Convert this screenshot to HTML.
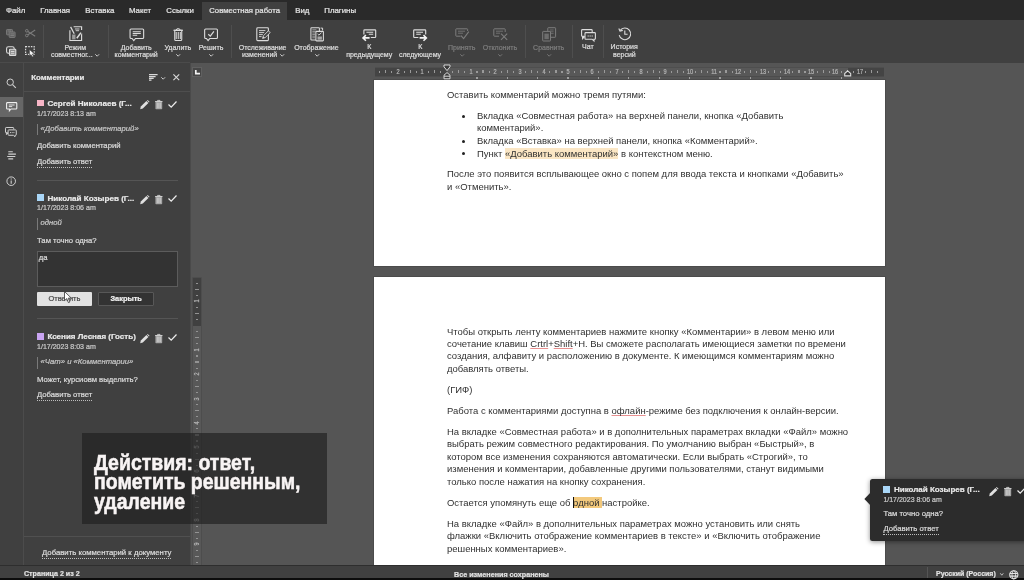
<!DOCTYPE html>
<html><head><meta charset="utf-8"><title>doc</title>
<style>
html,body{margin:0;padding:0;background:#555;}
body{width:1024px;height:580px;overflow:hidden;position:relative;font-family:"Liberation Sans",sans-serif;}
#app{position:absolute;left:0;top:0;width:1024px;height:580px;overflow:hidden;background:#555;filter:blur(0.35px);}
.t{position:absolute;white-space:nowrap;-webkit-text-stroke:0.22px currentColor;}
.t.d{-webkit-text-stroke:0;}
.r{position:absolute;}
svg{overflow:visible;}
</style></head><body><div id="app">
<div class="r" style="left:0px;top:0px;width:1024px;height:580px;background:#555;"></div>
<div class="r" style="left:374.5px;top:67.2px;width:509.5px;height:9px;background:#585858;"></div>
<div class="r" style="left:374.5px;top:67.2px;width:72.10000000000002px;height:9px;background:#444;"></div>
<div class="r" style="left:847.5px;top:67.2px;width:36.5px;height:9px;background:#444;"></div>
<div class="r" style="left:374.5px;top:76.2px;width:509.5px;height:1.2px;background:#4c4c4c;"></div>
<div class="r" style="left:374.5px;top:66.6px;width:509.5px;height:0.8px;background:#4e4e4e;"></div>
<div class="r" style="left:379.2px;top:70.5px;width:1.2px;height:2px;background:#9a9a9a;"></div>
<div class="r" style="left:385.2px;top:69.9px;width:1.2px;height:3.6px;background:#9a9a9a;"></div>
<div class="r" style="left:391.3px;top:70.5px;width:1.2px;height:2px;background:#9a9a9a;"></div>
<div class="t" style="left:298.0px;width:200px;text-align:center;top:68.12px;font-size:7px;line-height:8.75px;color:#b4b4b4;transform:scaleX(0.8);letter-spacing:-0.2px;">2</div>
<div class="r" style="left:403.5px;top:70.5px;width:1.2px;height:2px;background:#9a9a9a;"></div>
<div class="r" style="left:409.6px;top:69.9px;width:1.2px;height:3.6px;background:#9a9a9a;"></div>
<div class="r" style="left:415.6px;top:70.5px;width:1.2px;height:2px;background:#9a9a9a;"></div>
<div class="t" style="left:322.3px;width:200px;text-align:center;top:68.12px;font-size:7px;line-height:8.75px;color:#b4b4b4;transform:scaleX(0.8);letter-spacing:-0.2px;">1</div>
<div class="r" style="left:427.8px;top:70.5px;width:1.2px;height:2px;background:#9a9a9a;"></div>
<div class="r" style="left:433.9px;top:69.9px;width:1.2px;height:3.6px;background:#9a9a9a;"></div>
<div class="r" style="left:439.9px;top:70.5px;width:1.2px;height:2px;background:#9a9a9a;"></div>
<div class="r" style="left:452.1px;top:70.5px;width:1.2px;height:2px;background:#9a9a9a;"></div>
<div class="r" style="left:458.1px;top:69.9px;width:1.2px;height:3.6px;background:#9a9a9a;"></div>
<div class="r" style="left:464.2px;top:70.5px;width:1.2px;height:2px;background:#9a9a9a;"></div>
<div class="t" style="left:370.90000000000003px;width:200px;text-align:center;top:68.12px;font-size:7px;line-height:8.75px;color:#b4b4b4;transform:scaleX(0.8);letter-spacing:-0.2px;">1</div>
<div class="r" style="left:476.4px;top:70.5px;width:1.2px;height:2px;background:#9a9a9a;"></div>
<div class="r" style="left:482.4px;top:69.9px;width:1.2px;height:3.6px;background:#9a9a9a;"></div>
<div class="r" style="left:488.5px;top:70.5px;width:1.2px;height:2px;background:#9a9a9a;"></div>
<div class="t" style="left:395.20000000000005px;width:200px;text-align:center;top:68.12px;font-size:7px;line-height:8.75px;color:#b4b4b4;transform:scaleX(0.8);letter-spacing:-0.2px;">2</div>
<div class="r" style="left:500.7px;top:70.5px;width:1.2px;height:2px;background:#9a9a9a;"></div>
<div class="r" style="left:506.8px;top:69.9px;width:1.2px;height:3.6px;background:#9a9a9a;"></div>
<div class="r" style="left:512.8px;top:70.5px;width:1.2px;height:2px;background:#9a9a9a;"></div>
<div class="t" style="left:419.5px;width:200px;text-align:center;top:68.12px;font-size:7px;line-height:8.75px;color:#b4b4b4;transform:scaleX(0.8);letter-spacing:-0.2px;">3</div>
<div class="r" style="left:525.0px;top:70.5px;width:1.2px;height:2px;background:#9a9a9a;"></div>
<div class="r" style="left:531.0px;top:69.9px;width:1.2px;height:3.6px;background:#9a9a9a;"></div>
<div class="r" style="left:537.1px;top:70.5px;width:1.2px;height:2px;background:#9a9a9a;"></div>
<div class="t" style="left:443.80000000000007px;width:200px;text-align:center;top:68.12px;font-size:7px;line-height:8.75px;color:#b4b4b4;transform:scaleX(0.8);letter-spacing:-0.2px;">4</div>
<div class="r" style="left:549.3px;top:70.5px;width:1.2px;height:2px;background:#9a9a9a;"></div>
<div class="r" style="left:555.4px;top:69.9px;width:1.2px;height:3.6px;background:#9a9a9a;"></div>
<div class="r" style="left:561.4px;top:70.5px;width:1.2px;height:2px;background:#9a9a9a;"></div>
<div class="t" style="left:468.1px;width:200px;text-align:center;top:68.12px;font-size:7px;line-height:8.75px;color:#b4b4b4;transform:scaleX(0.8);letter-spacing:-0.2px;">5</div>
<div class="r" style="left:573.6px;top:70.5px;width:1.2px;height:2px;background:#9a9a9a;"></div>
<div class="r" style="left:579.6px;top:69.9px;width:1.2px;height:3.6px;background:#9a9a9a;"></div>
<div class="r" style="left:585.7px;top:70.5px;width:1.2px;height:2px;background:#9a9a9a;"></div>
<div class="t" style="left:492.4000000000001px;width:200px;text-align:center;top:68.12px;font-size:7px;line-height:8.75px;color:#b4b4b4;transform:scaleX(0.8);letter-spacing:-0.2px;">6</div>
<div class="r" style="left:597.9px;top:70.5px;width:1.2px;height:2px;background:#9a9a9a;"></div>
<div class="r" style="left:604.0px;top:69.9px;width:1.2px;height:3.6px;background:#9a9a9a;"></div>
<div class="r" style="left:610.0px;top:70.5px;width:1.2px;height:2px;background:#9a9a9a;"></div>
<div class="t" style="left:516.7px;width:200px;text-align:center;top:68.12px;font-size:7px;line-height:8.75px;color:#b4b4b4;transform:scaleX(0.8);letter-spacing:-0.2px;">7</div>
<div class="r" style="left:622.2px;top:70.5px;width:1.2px;height:2px;background:#9a9a9a;"></div>
<div class="r" style="left:628.2px;top:69.9px;width:1.2px;height:3.6px;background:#9a9a9a;"></div>
<div class="r" style="left:634.3px;top:70.5px;width:1.2px;height:2px;background:#9a9a9a;"></div>
<div class="t" style="left:541.0px;width:200px;text-align:center;top:68.12px;font-size:7px;line-height:8.75px;color:#b4b4b4;transform:scaleX(0.8);letter-spacing:-0.2px;">8</div>
<div class="r" style="left:646.5px;top:70.5px;width:1.2px;height:2px;background:#9a9a9a;"></div>
<div class="r" style="left:652.6px;top:69.9px;width:1.2px;height:3.6px;background:#9a9a9a;"></div>
<div class="r" style="left:658.6px;top:70.5px;width:1.2px;height:2px;background:#9a9a9a;"></div>
<div class="t" style="left:565.3000000000001px;width:200px;text-align:center;top:68.12px;font-size:7px;line-height:8.75px;color:#b4b4b4;transform:scaleX(0.8);letter-spacing:-0.2px;">9</div>
<div class="r" style="left:670.8px;top:70.5px;width:1.2px;height:2px;background:#9a9a9a;"></div>
<div class="r" style="left:676.9px;top:69.9px;width:1.2px;height:3.6px;background:#9a9a9a;"></div>
<div class="r" style="left:682.9px;top:70.5px;width:1.2px;height:2px;background:#9a9a9a;"></div>
<div class="t" style="left:589.6px;width:200px;text-align:center;top:68.12px;font-size:7px;line-height:8.75px;color:#b4b4b4;transform:scaleX(0.8);letter-spacing:-0.2px;">10</div>
<div class="r" style="left:695.1px;top:70.5px;width:1.2px;height:2px;background:#9a9a9a;"></div>
<div class="r" style="left:701.1px;top:69.9px;width:1.2px;height:3.6px;background:#9a9a9a;"></div>
<div class="r" style="left:707.2px;top:70.5px;width:1.2px;height:2px;background:#9a9a9a;"></div>
<div class="t" style="left:613.9000000000001px;width:200px;text-align:center;top:68.12px;font-size:7px;line-height:8.75px;color:#b4b4b4;transform:scaleX(0.8);letter-spacing:-0.2px;">11</div>
<div class="r" style="left:719.4px;top:70.5px;width:1.2px;height:2px;background:#9a9a9a;"></div>
<div class="r" style="left:725.4px;top:69.9px;width:1.2px;height:3.6px;background:#9a9a9a;"></div>
<div class="r" style="left:731.5px;top:70.5px;width:1.2px;height:2px;background:#9a9a9a;"></div>
<div class="t" style="left:638.2px;width:200px;text-align:center;top:68.12px;font-size:7px;line-height:8.75px;color:#b4b4b4;transform:scaleX(0.8);letter-spacing:-0.2px;">12</div>
<div class="r" style="left:743.7px;top:70.5px;width:1.2px;height:2px;background:#9a9a9a;"></div>
<div class="r" style="left:749.8px;top:69.9px;width:1.2px;height:3.6px;background:#9a9a9a;"></div>
<div class="r" style="left:755.8px;top:70.5px;width:1.2px;height:2px;background:#9a9a9a;"></div>
<div class="t" style="left:662.5px;width:200px;text-align:center;top:68.12px;font-size:7px;line-height:8.75px;color:#b4b4b4;transform:scaleX(0.8);letter-spacing:-0.2px;">13</div>
<div class="r" style="left:768.0px;top:70.5px;width:1.2px;height:2px;background:#9a9a9a;"></div>
<div class="r" style="left:774.1px;top:69.9px;width:1.2px;height:3.6px;background:#9a9a9a;"></div>
<div class="r" style="left:780.1px;top:70.5px;width:1.2px;height:2px;background:#9a9a9a;"></div>
<div class="t" style="left:686.8px;width:200px;text-align:center;top:68.12px;font-size:7px;line-height:8.75px;color:#b4b4b4;transform:scaleX(0.8);letter-spacing:-0.2px;">14</div>
<div class="r" style="left:792.3px;top:70.5px;width:1.2px;height:2px;background:#9a9a9a;"></div>
<div class="r" style="left:798.4px;top:69.9px;width:1.2px;height:3.6px;background:#9a9a9a;"></div>
<div class="r" style="left:804.4px;top:70.5px;width:1.2px;height:2px;background:#9a9a9a;"></div>
<div class="t" style="left:711.1px;width:200px;text-align:center;top:68.12px;font-size:7px;line-height:8.75px;color:#b4b4b4;transform:scaleX(0.8);letter-spacing:-0.2px;">15</div>
<div class="r" style="left:816.6px;top:70.5px;width:1.2px;height:2px;background:#9a9a9a;"></div>
<div class="r" style="left:822.6px;top:69.9px;width:1.2px;height:3.6px;background:#9a9a9a;"></div>
<div class="r" style="left:828.7px;top:70.5px;width:1.2px;height:2px;background:#9a9a9a;"></div>
<div class="t" style="left:735.4000000000001px;width:200px;text-align:center;top:68.12px;font-size:7px;line-height:8.75px;color:#b4b4b4;transform:scaleX(0.8);letter-spacing:-0.2px;">16</div>
<div class="r" style="left:840.9px;top:70.5px;width:1.2px;height:2px;background:#9a9a9a;"></div>
<div class="r" style="left:846.9px;top:69.9px;width:1.2px;height:3.6px;background:#9a9a9a;"></div>
<div class="r" style="left:853.0px;top:70.5px;width:1.2px;height:2px;background:#9a9a9a;"></div>
<div class="t" style="left:759.7px;width:200px;text-align:center;top:68.12px;font-size:7px;line-height:8.75px;color:#b4b4b4;transform:scaleX(0.8);letter-spacing:-0.2px;">17</div>
<div class="r" style="left:865.2px;top:70.5px;width:1.2px;height:2px;background:#9a9a9a;"></div>
<div class="r" style="left:871.2px;top:69.9px;width:1.2px;height:3.6px;background:#9a9a9a;"></div>
<div class="r" style="left:877.3px;top:70.5px;width:1.2px;height:2px;background:#9a9a9a;"></div>
<div class="r" style="left:476.3px;top:77px;width:1.4px;height:2px;background:#a0a0a0;"></div>
<div class="r" style="left:506.7px;top:77px;width:1.4px;height:2px;background:#a0a0a0;"></div>
<div class="r" style="left:537.0px;top:77px;width:1.4px;height:2px;background:#a0a0a0;"></div>
<div class="r" style="left:567.4px;top:77px;width:1.4px;height:2px;background:#a0a0a0;"></div>
<div class="r" style="left:597.8px;top:77px;width:1.4px;height:2px;background:#a0a0a0;"></div>
<div class="r" style="left:628.1px;top:77px;width:1.4px;height:2px;background:#a0a0a0;"></div>
<div class="r" style="left:658.5px;top:77px;width:1.4px;height:2px;background:#a0a0a0;"></div>
<div class="r" style="left:688.9px;top:77px;width:1.4px;height:2px;background:#a0a0a0;"></div>
<div class="r" style="left:719.3px;top:77px;width:1.4px;height:2px;background:#a0a0a0;"></div>
<div class="r" style="left:749.6px;top:77px;width:1.4px;height:2px;background:#a0a0a0;"></div>
<div class="r" style="left:780.0px;top:77px;width:1.4px;height:2px;background:#a0a0a0;"></div>
<div class="r" style="left:810.4px;top:77px;width:1.4px;height:2px;background:#a0a0a0;"></div>
<div class="r" style="left:840.8px;top:77px;width:1.4px;height:2px;background:#a0a0a0;"></div>
<div class="r" style="left:374.2px;top:80px;width:510.5px;height:185.6px;background:#fff;box-shadow:0 0 0 0.7px #484848;"></div>
<div class="r" style="left:374.2px;top:277.2px;width:510.5px;height:300px;background:#fff;box-shadow:0 0 0 0.7px #484848;"></div>
<svg class="r" style="left:441.6px;top:64.3px;" width="10" height="15.4" viewBox="0 0 10 15.4"><path d="M2 1 H8 V2.8 L5 6.6 L2 2.8 Z" fill="#3a3a3a" stroke="#d8d8d8" stroke-width="1"/><path d="M5 8.6 L8 11.2 V14.8 H2 V11.2 Z" fill="#3a3a3a" stroke="#d8d8d8" stroke-width="1"/><path d="M2 12.2 H8" stroke="#d8d8d8" stroke-width="1"/></svg>
<svg class="r" style="left:843.8px;top:70.2px;" width="7.4" height="6.6" viewBox="0 0 7.4 6.6"><path d="M3.7 0.8 L6.7 3.6 V5.9 H0.7 V3.6 Z" fill="#3a3a3a" stroke="#dcdcdc" stroke-width="1.1"/></svg>
<div class="r" style="left:192.2px;top:67px;width:10px;height:9.6px;background:#464646;border:0.7px solid #606060;box-sizing:border-box;"></div>
<svg class="r" style="left:195px;top:70.4px;" width="5" height="4.6" viewBox="0 0 5 4.6"><path d="M0.8 0 V3.7 H5" fill="none" stroke="#f2f2f2" stroke-width="1.7"/></svg>
<div class="r" style="left:193.3px;top:277.6px;width:7.6px;height:300px;background:#585858;box-shadow:0 0 0 0.7px #4a4a4a;"></div>
<div class="r" style="left:193.3px;top:277.6px;width:7.6px;height:48.0px;background:#404040;"></div>
<div class="r" style="left:196.3px;top:282.5px;width:1.8px;height:1.2px;background:#939393;"></div>
<div class="r" style="left:195.4px;top:288.6px;width:3.6px;height:1.2px;background:#939393;"></div>
<div class="r" style="left:196.3px;top:294.6px;width:1.8px;height:1.2px;background:#939393;"></div>
<div class="t" style="left:187.10000000000002px;top:297.30px;width:20px;height:8px;line-height:8px;text-align:center;font-size:7px;letter-spacing:-0.2px;color:#b4b4b4;transform:rotate(-90deg) scaleX(0.8);">1</div>
<div class="r" style="left:196.3px;top:306.8px;width:1.8px;height:1.2px;background:#939393;"></div>
<div class="r" style="left:195.4px;top:312.9px;width:3.6px;height:1.2px;background:#939393;"></div>
<div class="r" style="left:196.3px;top:318.9px;width:1.8px;height:1.2px;background:#939393;"></div>
<div class="r" style="left:196.3px;top:331.1px;width:1.8px;height:1.2px;background:#939393;"></div>
<div class="r" style="left:195.4px;top:337.1px;width:3.6px;height:1.2px;background:#939393;"></div>
<div class="r" style="left:196.3px;top:343.2px;width:1.8px;height:1.2px;background:#939393;"></div>
<div class="t" style="left:187.10000000000002px;top:345.90px;width:20px;height:8px;line-height:8px;text-align:center;font-size:7px;letter-spacing:-0.2px;color:#b4b4b4;transform:rotate(-90deg) scaleX(0.8);">1</div>
<div class="r" style="left:196.3px;top:355.4px;width:1.8px;height:1.2px;background:#939393;"></div>
<div class="r" style="left:195.4px;top:361.4px;width:3.6px;height:1.2px;background:#939393;"></div>
<div class="r" style="left:196.3px;top:367.5px;width:1.8px;height:1.2px;background:#939393;"></div>
<div class="t" style="left:187.10000000000002px;top:370.20px;width:20px;height:8px;line-height:8px;text-align:center;font-size:7px;letter-spacing:-0.2px;color:#b4b4b4;transform:rotate(-90deg) scaleX(0.8);">2</div>
<div class="r" style="left:196.3px;top:379.7px;width:1.8px;height:1.2px;background:#939393;"></div>
<div class="r" style="left:195.4px;top:385.8px;width:3.6px;height:1.2px;background:#939393;"></div>
<div class="r" style="left:196.3px;top:391.8px;width:1.8px;height:1.2px;background:#939393;"></div>
<div class="t" style="left:187.10000000000002px;top:394.50px;width:20px;height:8px;line-height:8px;text-align:center;font-size:7px;letter-spacing:-0.2px;color:#b4b4b4;transform:rotate(-90deg) scaleX(0.8);">3</div>
<div class="r" style="left:196.3px;top:404.0px;width:1.8px;height:1.2px;background:#939393;"></div>
<div class="r" style="left:195.4px;top:410.1px;width:3.6px;height:1.2px;background:#939393;"></div>
<div class="r" style="left:196.3px;top:416.1px;width:1.8px;height:1.2px;background:#939393;"></div>
<div class="t" style="left:187.10000000000002px;top:418.80px;width:20px;height:8px;line-height:8px;text-align:center;font-size:7px;letter-spacing:-0.2px;color:#b4b4b4;transform:rotate(-90deg) scaleX(0.8);">4</div>
<div class="r" style="left:196.3px;top:428.3px;width:1.8px;height:1.2px;background:#939393;"></div>
<div class="r" style="left:195.4px;top:434.4px;width:3.6px;height:1.2px;background:#939393;"></div>
<div class="r" style="left:196.3px;top:440.4px;width:1.8px;height:1.2px;background:#939393;"></div>
<div class="t" style="left:187.10000000000002px;top:443.10px;width:20px;height:8px;line-height:8px;text-align:center;font-size:7px;letter-spacing:-0.2px;color:#b4b4b4;transform:rotate(-90deg) scaleX(0.8);">5</div>
<div class="r" style="left:196.3px;top:452.6px;width:1.8px;height:1.2px;background:#939393;"></div>
<div class="r" style="left:195.4px;top:458.6px;width:3.6px;height:1.2px;background:#939393;"></div>
<div class="r" style="left:196.3px;top:464.7px;width:1.8px;height:1.2px;background:#939393;"></div>
<div class="t" style="left:187.10000000000002px;top:467.40px;width:20px;height:8px;line-height:8px;text-align:center;font-size:7px;letter-spacing:-0.2px;color:#b4b4b4;transform:rotate(-90deg) scaleX(0.8);">6</div>
<div class="r" style="left:196.3px;top:476.9px;width:1.8px;height:1.2px;background:#939393;"></div>
<div class="r" style="left:195.4px;top:483.0px;width:3.6px;height:1.2px;background:#939393;"></div>
<div class="r" style="left:196.3px;top:489.0px;width:1.8px;height:1.2px;background:#939393;"></div>
<div class="t" style="left:187.10000000000002px;top:491.70px;width:20px;height:8px;line-height:8px;text-align:center;font-size:7px;letter-spacing:-0.2px;color:#b4b4b4;transform:rotate(-90deg) scaleX(0.8);">7</div>
<div class="r" style="left:196.3px;top:501.2px;width:1.8px;height:1.2px;background:#939393;"></div>
<div class="r" style="left:195.4px;top:507.2px;width:3.6px;height:1.2px;background:#939393;"></div>
<div class="r" style="left:196.3px;top:513.3px;width:1.8px;height:1.2px;background:#939393;"></div>
<div class="t" style="left:187.10000000000002px;top:516.00px;width:20px;height:8px;line-height:8px;text-align:center;font-size:7px;letter-spacing:-0.2px;color:#b4b4b4;transform:rotate(-90deg) scaleX(0.8);">8</div>
<div class="r" style="left:196.3px;top:525.5px;width:1.8px;height:1.2px;background:#939393;"></div>
<div class="r" style="left:195.4px;top:531.6px;width:3.6px;height:1.2px;background:#939393;"></div>
<div class="r" style="left:196.3px;top:537.6px;width:1.8px;height:1.2px;background:#939393;"></div>
<div class="t" style="left:187.10000000000002px;top:540.30px;width:20px;height:8px;line-height:8px;text-align:center;font-size:7px;letter-spacing:-0.2px;color:#b4b4b4;transform:rotate(-90deg) scaleX(0.8);">9</div>
<div class="r" style="left:196.3px;top:549.8px;width:1.8px;height:1.2px;background:#939393;"></div>
<div class="r" style="left:195.4px;top:555.9px;width:3.6px;height:1.2px;background:#939393;"></div>
<div class="r" style="left:196.3px;top:561.9px;width:1.8px;height:1.2px;background:#939393;"></div>
<div class="t d" style="left:447px;top:89.40px;font-size:9.47px;line-height:12px;color:#303030;">Оставить комментарий можно тремя путями:</div>
<div class="r" style="left:461.9px;top:114.5px;width:3.1px;height:3.1px;background:#222;border-radius:50%;"></div>
<div class="r" style="left:461.9px;top:139.7px;width:3.1px;height:3.1px;background:#222;border-radius:50%;"></div>
<div class="r" style="left:461.9px;top:152.1px;width:3.1px;height:3.1px;background:#222;border-radius:50%;"></div>
<div class="t d" style="left:477px;top:110.00px;font-size:9.47px;line-height:12px;color:#303030;">Вкладка «Совместная работа» на верхней панели, кнопка «Добавить</div>
<div class="t d" style="left:477px;top:122.40px;font-size:9.47px;line-height:12px;color:#303030;">комментарий».</div>
<div class="t d" style="left:477px;top:135.20px;font-size:9.47px;line-height:12px;color:#303030;">Вкладка «Вставка» на верхней панели, кнопка «Комментарий».</div>
<div class="t d" style="left:477px;top:147.60px;font-size:9.47px;line-height:12px;color:#303030;">Пункт <span style="background:#fbe6c4;">«Добавить комментарий»</span> в контекстном меню.</div>
<div class="t d" style="left:447px;top:168.20px;font-size:9.47px;line-height:12px;color:#303030;">После это появится всплывающее окно с попем для ввода текста и кнопками «Добавить»</div>
<div class="t d" style="left:447px;top:180.60px;font-size:9.47px;line-height:12px;color:#303030;">и «Отменить».</div>
<div class="t d" style="left:447px;top:325.60px;font-size:9.47px;line-height:12px;color:#303030;">Чтобы открыть ленту комментариев нажмите кнопку «Комментарии» в левом меню или</div>
<div class="t d" style="left:447px;top:337.97px;font-size:9.47px;line-height:12px;color:#303030;">сочетание клавиш <span style="text-decoration:underline solid #e89090 0.6px;text-underline-offset:1.1px;text-decoration-skip-ink:none;">Crtrl</span>+<span style="text-decoration:underline solid #e89090 0.6px;text-underline-offset:1.1px;text-decoration-skip-ink:none;">Shift</span>+H. Вы сможете располагать имеющиеся заметки по времени</div>
<div class="t d" style="left:447px;top:350.34px;font-size:9.47px;line-height:12px;color:#303030;">создания, алфавиту и расположению в документе. К имеющимся комментариям можно</div>
<div class="t d" style="left:447px;top:362.71px;font-size:9.47px;line-height:12px;color:#303030;">добавлять ответы.</div>
<div class="t d" style="left:447px;top:383.50px;font-size:9.47px;line-height:12px;color:#303030;">(ГИФ)</div>
<div class="t d" style="left:447px;top:404.50px;font-size:9.47px;line-height:12px;color:#303030;">Работа с комментариями доступна в <span style="text-decoration:underline solid #e89090 0.6px;text-underline-offset:1.1px;text-decoration-skip-ink:none;">офлайн</span>-режиме без подключения к онлайн-версии.</div>
<div class="t d" style="left:447px;top:425.60px;font-size:9.47px;line-height:12px;color:#303030;">На вкладке «Совместная работа» и в дополнительных параметрах вкладки «Файл» можно</div>
<div class="t d" style="left:447px;top:438.13px;font-size:9.47px;line-height:12px;color:#303030;">выбрать режим совместного редактирования. По умолчанию выбран «Быстрый», в</div>
<div class="t d" style="left:447px;top:450.66px;font-size:9.47px;line-height:12px;color:#303030;">котором все изменения сохраняются автоматически. Если выбрать «Строгий», то</div>
<div class="t d" style="left:447px;top:463.19px;font-size:9.47px;line-height:12px;color:#303030;">изменения и комментарии, добавленные другими пользователями, станут видимыми</div>
<div class="t d" style="left:447px;top:475.72px;font-size:9.47px;line-height:12px;color:#303030;">только после нажатия на кнопку сохранения.</div>
<div class="t d" style="left:447px;top:496.60px;font-size:9.47px;line-height:12px;color:#303030;">Остается упомянуть еще об <span style="background:#f3c97c;">одной </span>настройке.</div>
<div class="r" style="left:573px;top:497.2px;width:1px;height:11px;background:#111;"></div>
<div class="t d" style="left:447px;top:517.60px;font-size:9.47px;line-height:12px;color:#303030;">На вкладке «Файл» в дополнительных параметрах можно установить или снять</div>
<div class="t d" style="left:447px;top:530.13px;font-size:9.47px;line-height:12px;color:#303030;">флажки «Включить отображение комментариев в тексте» и «Включить отображение</div>
<div class="t d" style="left:447px;top:542.66px;font-size:9.47px;line-height:12px;color:#303030;">решенных комментариев».</div>
<div class="r" style="left:0px;top:0px;width:1024px;height:20px;background:#2a2a2a;"></div>
<div class="r" style="left:0px;top:20px;width:1024px;height:42.6px;background:#404040;"></div>
<div class="r" style="left:201.6px;top:2.3px;width:85.8px;height:18.2px;background:#404040;"></div>
<div class="t " style="left:6px;top:6.00px;font-size:7.85px;line-height:9.81px;color:#e4e4e4;">Файл</div>
<div class="t " style="left:40.2px;top:6.00px;font-size:7.85px;line-height:9.81px;color:#e4e4e4;">Главная</div>
<div class="t " style="left:85.3px;top:6.00px;font-size:7.85px;line-height:9.81px;color:#e4e4e4;">Вставка</div>
<div class="t " style="left:129px;top:6.00px;font-size:7.85px;line-height:9.81px;color:#e4e4e4;">Макет</div>
<div class="t " style="left:166.3px;top:6.00px;font-size:7.85px;line-height:9.81px;color:#e4e4e4;">Ссылки</div>
<div class="t " style="left:209.3px;top:6.08px;font-size:7.72px;line-height:9.65px;color:#e4e4e4;">Совместная работа</div>
<div class="t " style="left:295.2px;top:6.00px;font-size:7.85px;line-height:9.81px;color:#e4e4e4;">Вид</div>
<div class="t " style="left:324.3px;top:6.00px;font-size:7.85px;line-height:9.81px;color:#e4e4e4;">Плагины</div>
<div class="r" style="left:43.2px;top:25px;width:1px;height:33px;background:#4e4e4e;"></div>
<div class="r" style="left:107.5px;top:25px;width:1px;height:33px;background:#4e4e4e;"></div>
<div class="r" style="left:231px;top:25px;width:1px;height:33px;background:#4e4e4e;"></div>
<div class="r" style="left:525.2px;top:25px;width:1px;height:33px;background:#4e4e4e;"></div>
<div class="r" style="left:572.4px;top:25px;width:1px;height:33px;background:#4e4e4e;"></div>
<div class="r" style="left:602.9px;top:25px;width:1px;height:33px;background:#4e4e4e;"></div>
<svg class="r" style="left:6.2px;top:28.7px;" width="9.6" height="9" viewBox="0 0 9.6 9"><rect x="0.5" y="0.5" width="6" height="5.4" rx="0.7" stroke="#7c7c7c" fill="#5e5e5e" stroke-width="0.9"/><rect x="3.2" y="2.9" width="5.9" height="5.6" rx="0.7" stroke="#7c7c7c" fill="#626262" stroke-width="0.9"/><path d="M4.4 4.9H8M4.4 6.5H8" stroke="#8a8a8a" stroke-width="0.7"/><path d="M1.6 2H5.2" stroke="#8a8a8a" stroke-width="0.7"/></svg>
<svg class="r" style="left:25.4px;top:28.5px;" width="10.4" height="8.4" viewBox="0 0 10.4 8.4"><circle cx="1.8" cy="1.8" r="1.3" stroke="#7c7c7c" fill="none" stroke-width="1"/><circle cx="1.8" cy="6.5" r="1.3" stroke="#7c7c7c" fill="none" stroke-width="1"/><path d="M2.9 2.5 L10.2 7.2 M2.9 5.8 L10.2 1" stroke="#7c7c7c" stroke-width="1.05"/></svg>
<svg class="r" style="left:5.9px;top:45.9px;" width="10.4" height="10" viewBox="0 0 10.4 10"><rect x="0.6" y="0.7" width="7.6" height="6.6" rx="1.8" stroke="#dcdcdc" fill="#404040" stroke-width="1.1"/><rect x="3.5" y="3.3" width="6.3" height="6.1" rx="0.7" stroke="#dcdcdc" fill="#8c8c8c" stroke-width="1.1"/><path d="M4.9 5.5H8.4M4.9 7.3H8.4" stroke="#ececec" stroke-width="0.8"/></svg>
<svg class="r" style="left:25.4px;top:45.8px;" width="10.6" height="10.8" viewBox="0 0 10.6 10.8"><rect x="0.6" y="0.6" width="8.6" height="7.8" stroke="#dcdcdc" fill="none" stroke-width="1.15" stroke-dasharray="1.5 1.15"/><path d="M4.4 3.4 V10 L6 8.6 L7.2 10.9 L8.5 10.3 L7.4 8 L9.6 7.9 Z" fill="#f4f4f4" stroke="#3a3a3a" stroke-width="0.6"/></svg>
<svg class="r" style="left:68.6px;top:26.4px;" width="13.6" height="15.2" viewBox="0 0 13.6 15.2"><path d="M0.9 4.3 V14.5 H12.6 V7.2 M12.6 3.9 V0.8 H4.6" stroke="#dcdcdc" fill="none" stroke-width="1.15"/><path d="M5.9 3H10.5M6.7 4.7H10.1" stroke="#dcdcdc" stroke-width="0.9"/><rect x="3.1" y="8.5" width="3.4" height="4.9" fill="#9a9a9a"/><path d="M1.6 0.9 L5.2 7.7" stroke="#404040" stroke-width="2.4"/><path d="M1.6 0.9 L5.2 7.7" stroke="#dcdcdc" stroke-width="1.25"/><path d="M12 6.6 L7.8 12.3" stroke="#404040" stroke-width="2.6"/><path d="M12 6.6 L7.8 12.3" stroke="#dcdcdc" stroke-width="1.55"/></svg>
<div class="t" style="left:-24.799999999999997px;width:200px;text-align:center;top:43.52px;font-size:7px;line-height:8.75px;color:#dcdcdc;">Режим</div>
<div class="t" style="left:-28.200000000000003px;width:200px;text-align:center;top:51.02px;font-size:7px;line-height:8.75px;color:#dcdcdc;">совместног...</div>
<svg class="r" style="left:95.0px;top:53.900000000000006px;" width="4.4" height="2.6" viewBox="0 0 4.4 2.6"><path d="M0.3 0.3 L2.2 2.2 L4.1000000000000005 0.3" stroke="#dcdcdc" fill="none" stroke-width="0.9"/></svg>
<svg class="r" style="left:128.6px;top:27.8px;" width="16" height="13" viewBox="0 0 16 13"><path d="M2.05 1.05 H13.65 Q14.65 1.05 14.65 2.05 V9.45 Q14.65 10.45 13.65 10.45 H6.5 L4.8 12.549999999999999 L3.0999999999999996 10.45 H2.05 Q1.05 10.45 1.05 9.45 V2.05 Q1.05 1.05 2.05 1.05 Z" stroke="#dcdcdc" fill="none" stroke-width="1.1"/><path d="M3.7 3.7H11.8M3.7 5.5H11.8M3.7 7.3H8.2" stroke="#dcdcdc" stroke-width="1.05"/></svg>
<div class="t" style="left:36.19999999999999px;width:200px;text-align:center;top:43.62px;font-size:7px;line-height:8.75px;color:#dcdcdc;">Добавить</div>
<div class="t" style="left:36.19999999999999px;width:200px;text-align:center;top:50.83px;font-size:7px;line-height:8.75px;color:#dcdcdc;">комментарий</div>
<svg class="r" style="left:173.4px;top:28px;" width="10.4" height="13.2" viewBox="0 0 10.4 13.2"><path d="M1.75 2.4 H8.75 V11.5 Q8.75 12.5 7.75 12.5 H2.75 Q1.75 12.5 1.75 11.5 Z" stroke="#dcdcdc" fill="none" stroke-width="1.1"/><path d="M0.4 2.3 H10" stroke="#dcdcdc" stroke-width="1.1"/><path d="M3.3 2.1 Q3.3 0.6 5.2 0.6 Q7.1 0.6 7.1 2.1" stroke="#dcdcdc" fill="none" stroke-width="1"/><path d="M3.2 4V11M5.25 4V11M7.3 4V11" stroke="#dcdcdc" stroke-width="1.05"/></svg>
<div class="t" style="left:77.80000000000001px;width:200px;text-align:center;top:43.62px;font-size:7px;line-height:8.75px;color:#dcdcdc;">Удалить</div>
<svg class="r" style="left:176.20000000000002px;top:54.1px;" width="4.4" height="2.6" viewBox="0 0 4.4 2.6"><path d="M0.3 0.3 L2.2 2.2 L4.1000000000000005 0.3" stroke="#dcdcdc" fill="none" stroke-width="0.9"/></svg>
<svg class="r" style="left:204px;top:27.8px;" width="16" height="13" viewBox="0 0 16 13"><path d="M1.65 1.05 H12.45 Q13.45 1.05 13.45 2.05 V9.45 Q13.45 10.45 12.45 10.45 H5.8 L4.1 12.549999999999999 L2.3999999999999995 10.45 H1.65 Q0.65 10.45 0.65 9.45 V2.05 Q0.65 1.05 1.65 1.05 Z" stroke="#dcdcdc" fill="none" stroke-width="1.1"/><path d="M4.3 6.3 L6.3 8.1 L9.9 3.4" stroke="#dcdcdc" fill="none" stroke-width="1.2"/></svg>
<div class="t" style="left:111px;width:200px;text-align:center;top:43.62px;font-size:7px;line-height:8.75px;color:#dcdcdc;">Решить</div>
<svg class="r" style="left:209.0px;top:54.1px;" width="4.4" height="2.6" viewBox="0 0 4.4 2.6"><path d="M0.3 0.3 L2.2 2.2 L4.1000000000000005 0.3" stroke="#dcdcdc" fill="none" stroke-width="0.9"/></svg>
<svg class="r" style="left:255.8px;top:27px;" width="15" height="14.4" viewBox="0 0 15 14.4"><rect x="0.8" y="0.8" width="11.6" height="12.8" rx="0.9" stroke="#dcdcdc" fill="none" stroke-width="1.1"/><path d="M3 3.6H9.4M3 5.6H8.2M3 7.6H6.8M3 9.6H5.6" stroke="#dcdcdc" stroke-width="0.9"/><path d="M6.6 11.4 L7.4 8.8 L12.4 3.8 L14.2 5.6 L9.2 10.6 Z" stroke="#dcdcdc" fill="#404040" stroke-width="0.9"/><path d="M6.6 11.4 L7.4 9.4 L8.6 10.6 Z" fill="#dcdcdc"/></svg>
<div class="t" style="left:162.60000000000002px;width:200px;text-align:center;top:43.52px;font-size:7px;line-height:8.75px;color:#dcdcdc;">Отслеживание</div>
<div class="t" style="left:159.60000000000002px;width:200px;text-align:center;top:50.92px;font-size:7px;line-height:8.75px;color:#dcdcdc;">изменений</div>
<svg class="r" style="left:279.6px;top:53.900000000000006px;" width="4.4" height="2.6" viewBox="0 0 4.4 2.6"><path d="M0.3 0.3 L2.2 2.2 L4.1000000000000005 0.3" stroke="#dcdcdc" fill="none" stroke-width="0.9"/></svg>
<svg class="r" style="left:310px;top:26.8px;" width="14.4" height="14.6" viewBox="0 0 14.4 14.6"><rect x="0.9" y="0.8" width="8.5" height="12.3" rx="0.6" stroke="#dcdcdc" fill="none" stroke-width="1.05"/><path d="M2.3 2.8H6.4M2.3 4.4H5.6M2.3 6H5.2M2.3 7.6H5.2M2.3 9.2H5.2M2.3 10.8H5.2" stroke="#b4b4b4" stroke-width="0.8"/><path d="M10.6 1.1 H12.6 V3.4" stroke="#dcdcdc" fill="none" stroke-width="1"/><rect x="5.9" y="4.4" width="7.5" height="9.5" rx="0.6" stroke="#dcdcdc" fill="#404040" stroke-width="1.05"/><path d="M7.6 6.9 L8.9 8.1 L11.5 5.7" stroke="#dcdcdc" fill="none" stroke-width="0.95"/><rect x="7.5" y="9.5" width="4.4" height="3.2" fill="#a6a6a6"/></svg>
<div class="t" style="left:216.39999999999998px;width:200px;text-align:center;top:43.52px;font-size:7px;line-height:8.75px;color:#dcdcdc;">Отображение</div>
<svg class="r" style="left:315.40000000000003px;top:53.900000000000006px;" width="4.4" height="2.6" viewBox="0 0 4.4 2.6"><path d="M0.3 0.3 L2.2 2.2 L4.1000000000000005 0.3" stroke="#dcdcdc" fill="none" stroke-width="0.9"/></svg>
<svg class="r" style="left:361.8px;top:28.6px;" width="14.4" height="12.2" viewBox="0 0 14.4 12.2"><path d="M8.8 8.5 H13 Q13.7 8.5 13.7 7.8 V1.6 Q13.7 0.9 13 0.9 H2.6 Q1.9 0.9 1.9 1.6 V5.4" stroke="#dcdcdc" fill="none" stroke-width="1.15"/><path d="M4.4 3.2H11.2M6.8 5.3H11.2" stroke="#dcdcdc" stroke-width="1.05"/><path d="M1 8.9 H7.6 M3.9 6.1 L1 8.9 L3.9 11.7" stroke="#f4f4f4" fill="none" stroke-width="1.55"/></svg>
<div class="t" style="left:269.3px;width:200px;text-align:center;top:43.33px;font-size:7px;line-height:8.75px;color:#dcdcdc;">К</div>
<div class="t" style="left:269.2px;width:200px;text-align:center;top:51.02px;font-size:7px;line-height:8.75px;color:#dcdcdc;">предыдущему</div>
<svg class="r" style="left:413.4px;top:28.6px;" width="14.4" height="12.2" viewBox="0 0 14.4 12.2"><path d="M5.4 8.5 H1.4 Q0.7 8.5 0.7 7.8 V1.6 Q0.7 0.9 1.4 0.9 H12 Q12.7 0.9 12.7 1.6 V5.4" stroke="#dcdcdc" fill="none" stroke-width="1.15"/><path d="M3.2 3.2H10M3.2 5.3H7.8" stroke="#dcdcdc" stroke-width="1.05"/><path d="M13.4 8.9 H6.6 M10.5 6.1 L13.4 8.9 L10.5 11.7" stroke="#f4f4f4" fill="none" stroke-width="1.55"/></svg>
<div class="t" style="left:320.3px;width:200px;text-align:center;top:43.33px;font-size:7px;line-height:8.75px;color:#dcdcdc;">К</div>
<div class="t" style="left:320px;width:200px;text-align:center;top:51.02px;font-size:7px;line-height:8.75px;color:#dcdcdc;">следующему</div>
<svg class="r" style="left:455px;top:28.2px;" width="14.6" height="12" viewBox="0 0 14.6 12"><path d="M5.6 8.2 H1.4 Q0.8 8.2 0.8 7.6 V1.4 Q0.8 0.8 1.4 0.8 H12 Q12.6 0.8 12.6 1.4 V3" stroke="#7c7c7c" fill="none" stroke-width="1"/><path d="M3 3.2H10M3 5.2H8" stroke="#7c7c7c" stroke-width="0.8"/><path d="M6 7.6 L8.6 10.6 L13.8 3.6" stroke="#7c7c7c" fill="none" stroke-width="1.1"/></svg>
<div class="t" style="left:361.7px;width:200px;text-align:center;top:43.52px;font-size:7px;line-height:8.75px;color:#7c7c7c;">Принять</div>
<svg class="r" style="left:460.40000000000003px;top:54.0px;" width="4.4" height="2.6" viewBox="0 0 4.4 2.6"><path d="M0.3 0.3 L2.2 2.2 L4.1000000000000005 0.3" stroke="#7c7c7c" fill="none" stroke-width="0.9"/></svg>
<svg class="r" style="left:492.6px;top:28.2px;" width="15" height="12.4" viewBox="0 0 15 12.4"><path d="M6 8.2 H1.4 Q0.8 8.2 0.8 7.6 V1.4 Q0.8 0.8 1.4 0.8 H11.6 Q12.2 0.8 12.2 1.4 V4" stroke="#7c7c7c" fill="none" stroke-width="1"/><path d="M3 3.2H10M3 5.2H7" stroke="#7c7c7c" stroke-width="0.8"/><path d="M8 5.6 L14.2 11.8 M14.2 5.6 L8 11.8" stroke="#7c7c7c" fill="none" stroke-width="1.1"/></svg>
<div class="t" style="left:400px;width:200px;text-align:center;top:43.52px;font-size:7px;line-height:8.75px;color:#7c7c7c;">Отклонить</div>
<svg class="r" style="left:498.2px;top:54.0px;" width="4.4" height="2.6" viewBox="0 0 4.4 2.6"><path d="M0.3 0.3 L2.2 2.2 L4.1000000000000005 0.3" stroke="#7c7c7c" fill="none" stroke-width="0.9"/></svg>
<svg class="r" style="left:541.8px;top:26.8px;" width="14.4" height="14.8" viewBox="0 0 14.4 14.8"><rect x="5.8" y="0.7" width="7.8" height="9.6" rx="0.6" stroke="#7c7c7c" fill="none" stroke-width="1"/><path d="M7.8 3H11.6M7.8 4.8H11.6M7.8 6.6H11.6" stroke="#7c7c7c" stroke-width="0.7"/><rect x="0.7" y="4.4" width="7.8" height="9.6" rx="0.6" stroke="#7c7c7c" fill="#404040" stroke-width="1"/><rect x="2.4" y="6.6" width="4.4" height="5.6" fill="#7c7c7c" opacity="0.75"/></svg>
<div class="t" style="left:448.70000000000005px;width:200px;text-align:center;top:43.52px;font-size:7px;line-height:8.75px;color:#7c7c7c;">Сравнить</div>
<svg class="r" style="left:547.0px;top:54.0px;" width="4.4" height="2.6" viewBox="0 0 4.4 2.6"><path d="M0.3 0.3 L2.2 2.2 L4.1000000000000005 0.3" stroke="#7c7c7c" fill="none" stroke-width="0.9"/></svg>
<svg class="r" style="left:580.6px;top:28.6px;" width="15.2" height="12.4" viewBox="0 0 15.2 12.4"><path d="M3 7.4 H1.6 V9.6 L3.8 7.4 M3 7.4 H1.4 Q0.6 7.4 0.6 6.6 V1.4 Q0.6 0.6 1.4 0.6 H10.4 Q11.2 0.6 11.2 1.4 V3" stroke="#dcdcdc" fill="none" stroke-width="1.1"/><path d="M4.8 3.6 H13.6 Q14.4 3.6 14.4 4.4 V9.4 Q14.4 10.2 13.6 10.2 H13 V12 L11 10.2 H4.8 Q4 10.2 4 9.4 V4.4 Q4 3.6 4.8 3.6 Z" stroke="#dcdcdc" fill="#404040" stroke-width="1.1"/><path d="M6.6 7H7.8M8.6 7H9.8M10.6 7H11.8" stroke="#dcdcdc" stroke-width="1.1"/></svg>
<div class="t" style="left:487.79999999999995px;width:200px;text-align:center;top:43.33px;font-size:7px;line-height:8.75px;color:#dcdcdc;">Чат</div>
<svg class="r" style="left:618.1px;top:27.2px;" width="13.6" height="13.6" viewBox="0 0 13.6 13.6"><path d="M2.2 3.4 A5.8 5.8 0 1 1 1.2 8.2" stroke="#dcdcdc" fill="none" stroke-width="1.1"/><path d="M0.8 1.4 L2 4 L4.8 3.4" stroke="#dcdcdc" fill="none" stroke-width="1.1"/><path d="M6.8 3.4 V7.2 H9.6" stroke="#dcdcdc" fill="none" stroke-width="1.1"/></svg>
<div class="t" style="left:524.2px;width:200px;text-align:center;top:43.33px;font-size:7px;line-height:8.75px;color:#dcdcdc;">История</div>
<div class="t" style="left:524.4px;width:200px;text-align:center;top:50.83px;font-size:7px;line-height:8.75px;color:#dcdcdc;">версий</div>
<div class="r" style="left:0px;top:62.6px;width:24px;height:503px;background:#404040;"></div>
<div class="r" style="left:23.4px;top:62.6px;width:0.8px;height:503px;background:#4c4c4c;"></div>
<div class="r" style="left:0px;top:97.4px;width:23.4px;height:19.8px;background:#666;"></div>
<svg class="r" style="left:5.6px;top:77.6px;" width="10.4" height="10.4" viewBox="0 0 10.4 10.4"><circle cx="4.2" cy="4.2" r="3.2" stroke="#d0d0d0" fill="none" stroke-width="1"/><path d="M6.6 6.6 L9.8 9.8" stroke="#d0d0d0" stroke-width="1.1"/></svg>
<svg class="r" style="left:5.6px;top:102.4px;" width="11.4" height="9.6" viewBox="0 0 11.4 9.6"><path d="M1.4 0.6 H10 Q10.8 0.6 10.8 1.4 V6.2 Q10.8 7 10 7 H5 L3.4 8.8 V7 H1.4 Q0.6 7 0.6 6.2 V1.4 Q0.6 0.6 1.4 0.6 Z" stroke="#f0f0f0" fill="none" stroke-width="1.1"/><path d="M2.8 3H8.6M2.8 4.6H6.2" stroke="#f0f0f0" stroke-width="0.9"/></svg>
<svg class="r" style="left:5.4px;top:127.4px;" width="11.8" height="10.4" viewBox="0 0 11.8 10.4"><path d="M2.6 5.8 H1.4 V7.6 L3.2 5.8 M2.6 5.8 H1.2 Q0.5 5.8 0.5 5.1 V1.2 Q0.5 0.5 1.2 0.5 H8 Q8.7 0.5 8.7 1.2 V2.4" stroke="#d0d0d0" fill="none" stroke-width="1"/><path d="M3.8 2.9 H10.6 Q11.3 2.9 11.3 3.6 V7.6 Q11.3 8.3 10.6 8.3 H10 V9.8 L8.4 8.3 H3.8 Q3.1 8.3 3.1 7.6 V3.6 Q3.1 2.9 3.8 2.9 Z" stroke="#d0d0d0" fill="#404040" stroke-width="1"/><path d="M5 5.6H6M6.7 5.6H7.7M8.4 5.6H9.4" stroke="#d0d0d0" stroke-width="1"/></svg>
<svg class="r" style="left:6.6px;top:151.4px;" width="9.4" height="8.6" viewBox="0 0 9.4 8.6"><path d="M1.3 0.7H5.8M1.3 3.1H8.9M0.2 5.5H8.3M1.3 7.9H6.2" stroke="#d0d0d0" stroke-width="1.15"/></svg>
<svg class="r" style="left:6.2px;top:176.2px;" width="10.4" height="10.4" viewBox="0 0 10.4 10.4"><circle cx="5.2" cy="5.2" r="4.3" stroke="#d0d0d0" fill="none" stroke-width="1"/><path d="M5.2 4.4V7.8M5.2 2.6V3.6" stroke="#d0d0d0" stroke-width="1.1"/></svg>
<div class="r" style="left:24.2px;top:62.6px;width:166px;height:503px;background:#404040;"></div>
<div class="r" style="left:190px;top:62.6px;width:0.8px;height:503px;background:#4a4a4a;"></div>
<div class="r" style="left:24.2px;top:91.3px;width:166px;height:0.9px;background:#4e4e4e;"></div>
<div class="r" style="left:0px;top:62px;width:190.4px;height:1.3px;background:#4b4b4b;"></div>
<div class="r" style="left:24.2px;top:535.8px;width:166px;height:0.8px;background:#505050;"></div>
<div class="t " style="left:31.2px;top:72.96px;font-size:7.9px;line-height:9.88px;color:#e6e6e6;font-weight:bold;">Комментарии</div>
<svg class="r" style="left:149.4px;top:74px;" width="8.6" height="7" viewBox="0 0 8.6 7"><path d="M0 0.7H8.6M0 2.55H6.6M0 4.4H4.7M0 6.25H2.5" stroke="#dadada" stroke-width="1.25"/></svg>
<svg class="r" style="left:161.0px;top:76.9px;" width="4.4" height="2.6" viewBox="0 0 4.4 2.6"><path d="M0.3 0.3 L2.2 2.2 L4.1000000000000005 0.3" stroke="#dadada" fill="none" stroke-width="0.9"/></svg>
<svg class="r" style="left:173.4px;top:74.2px;" width="6.6" height="6.6" viewBox="0 0 6.6 6.6"><path d="M0.4 0.4L6.2 6.2M6.2 0.4L0.4 6.2" stroke="#dadada" stroke-width="1.1"/></svg>
<div class="r" style="left:37.4px;top:99.6px;width:6.6px;height:6.6px;background:#f7b5c6;"></div>
<div class="t " style="left:47.4px;top:98.94px;font-size:8.1px;line-height:10.12px;color:#e8e8e8;font-weight:bold;">Сергей Николаев (Г...</div>
<div class="t " style="left:37px;top:109.89px;font-size:7.05px;line-height:8.81px;color:#c8c8c8;">1/17/2023 8:13 am</div>
<div class="r" style="left:36.8px;top:123.8px;width:0.8px;height:11.6px;background:#7a7a7a;"></div>
<div class="t " style="left:40.6px;top:123.59px;font-size:7.7px;line-height:9.62px;color:#c4c4c4;font-style:italic;">«Добавить комментарий»</div>
<div class="t " style="left:37px;top:141.49px;font-size:7.7px;line-height:9.62px;color:#dadada;">Добавить комментарий</div>
<svg class="r" style="left:139.8px;top:100.4px;" width="9.4" height="9.4" viewBox="0 0 9.4 9.4"><path d="M0.2 9.2 L0.8 6.6 L6.4 1 L8.4 3 L2.8 8.6 Z" fill="#e0e0e0"/><path d="M7 0.5 L7.7 -0.1 L9.5 1.7 L8.9 2.4 Z" fill="#e0e0e0"/></svg>
<svg class="r" style="left:154.70000000000002px;top:100.1px;" width="7.6" height="9.4" viewBox="0 0 7.6 9.4"><path d="M0.4 1.9 H7.2 V8.5 Q7.2 9.2 6.5 9.2 H1.1 Q0.4 9.2 0.4 8.5 Z" fill="#a4a4a4"/><path d="M0.1 1.5H7.5" stroke="#e0e0e0" stroke-width="0.9"/><path d="M2.6 1.2V0.4H5V1.2" fill="none" stroke="#e0e0e0" stroke-width="0.8"/><path d="M2.3 2.8V8.2M3.8 2.8V8.2M5.3 2.8V8.2" stroke="#d8d8d8" stroke-width="0.7"/></svg>
<svg class="r" style="left:168.20000000000002px;top:100.8px;" width="9" height="7" viewBox="0 0 9 7"><path d="M0.5 3.5 L3.2 6.2 L8.5 0.5" fill="none" stroke="#ececec" stroke-width="1.25"/></svg>
<div class="t " style="left:37px;top:156.99px;font-size:7.7px;line-height:9.62px;color:#dadada;border-bottom:0.8px dotted #bdbdbd;padding-bottom:0.2px;">Добавить ответ</div>
<div class="r" style="left:37px;top:179.8px;width:140.6px;height:0.8px;background:#555;"></div>
<div class="r" style="left:37.4px;top:194.2px;width:6.6px;height:6.6px;background:#a9d6f7;"></div>
<div class="t " style="left:47.4px;top:193.54px;font-size:8.1px;line-height:10.12px;color:#e8e8e8;font-weight:bold;">Николай Козырев (Г...</div>
<div class="t " style="left:37px;top:204.49px;font-size:7.05px;line-height:8.81px;color:#c8c8c8;">1/17/2023 8:06 am</div>
<div class="r" style="left:36.8px;top:218.39999999999998px;width:0.8px;height:11.6px;background:#7a7a7a;"></div>
<div class="t " style="left:40.6px;top:218.19px;font-size:7.7px;line-height:9.62px;color:#c4c4c4;font-style:italic;">одной</div>
<div class="t " style="left:37px;top:236.09px;font-size:7.7px;line-height:9.62px;color:#dadada;">Там точно одна?</div>
<svg class="r" style="left:139.8px;top:195.0px;" width="9.4" height="9.4" viewBox="0 0 9.4 9.4"><path d="M0.2 9.2 L0.8 6.6 L6.4 1 L8.4 3 L2.8 8.6 Z" fill="#e0e0e0"/><path d="M7 0.5 L7.7 -0.1 L9.5 1.7 L8.9 2.4 Z" fill="#e0e0e0"/></svg>
<svg class="r" style="left:154.70000000000002px;top:194.7px;" width="7.6" height="9.4" viewBox="0 0 7.6 9.4"><path d="M0.4 1.9 H7.2 V8.5 Q7.2 9.2 6.5 9.2 H1.1 Q0.4 9.2 0.4 8.5 Z" fill="#a4a4a4"/><path d="M0.1 1.5H7.5" stroke="#e0e0e0" stroke-width="0.9"/><path d="M2.6 1.2V0.4H5V1.2" fill="none" stroke="#e0e0e0" stroke-width="0.8"/><path d="M2.3 2.8V8.2M3.8 2.8V8.2M5.3 2.8V8.2" stroke="#d8d8d8" stroke-width="0.7"/></svg>
<svg class="r" style="left:168.20000000000002px;top:195.4px;" width="9" height="7" viewBox="0 0 9 7"><path d="M0.5 3.5 L3.2 6.2 L8.5 0.5" fill="none" stroke="#ececec" stroke-width="1.25"/></svg>
<div class="r" style="left:37px;top:251.4px;width:140.6px;height:35.2px;background:#333;border:0.8px solid #5c5c5c;box-sizing:border-box;"></div>
<div class="t " style="left:38.8px;top:253.49px;font-size:7.7px;line-height:9.62px;color:#dcdcdc;">да</div>
<div class="r" style="left:37px;top:291.6px;width:55.2px;height:14.2px;background:#e2e2e2;border-radius:1px;"></div>
<div class="t" style="left:-35.599999999999994px;width:200px;text-align:center;top:294.01px;font-size:7.5px;line-height:9.38px;color:#484848;">Ответить</div>
<div class="r" style="left:98.1px;top:291.6px;width:55.5px;height:14.2px;background:#333;border:0.8px solid #585858;box-sizing:border-box;border-radius:1px;"></div>
<div class="t" style="left:26.200000000000003px;width:200px;text-align:center;top:293.57px;font-size:7.4px;line-height:9.25px;color:#f0f0f0;font-weight:bold;">Закрыть</div>
<div class="r" style="left:37px;top:318.4px;width:140.6px;height:0.8px;background:#555;"></div>
<div class="r" style="left:37.4px;top:333px;width:6.6px;height:6.6px;background:#c9a4f2;"></div>
<div class="t " style="left:47.4px;top:332.40px;font-size:8.0px;line-height:10.0px;color:#e8e8e8;font-weight:bold;">Ксения Лесная (Гость)</div>
<div class="t " style="left:37px;top:343.30px;font-size:7.05px;line-height:8.81px;color:#c8c8c8;">1/17/2023 8:03 am</div>
<div class="r" style="left:36.8px;top:357.2px;width:0.8px;height:11.6px;background:#7a7a7a;"></div>
<div class="t " style="left:40.6px;top:356.99px;font-size:7.7px;line-height:9.62px;color:#c4c4c4;font-style:italic;">«Чат» и «Комментарии»</div>
<div class="t " style="left:37px;top:374.89px;font-size:7.7px;line-height:9.62px;color:#dadada;">Может, курсиовм выделить?</div>
<svg class="r" style="left:139.8px;top:333.79999999999995px;" width="9.4" height="9.4" viewBox="0 0 9.4 9.4"><path d="M0.2 9.2 L0.8 6.6 L6.4 1 L8.4 3 L2.8 8.6 Z" fill="#e0e0e0"/><path d="M7 0.5 L7.7 -0.1 L9.5 1.7 L8.9 2.4 Z" fill="#e0e0e0"/></svg>
<svg class="r" style="left:154.70000000000002px;top:333.5px;" width="7.6" height="9.4" viewBox="0 0 7.6 9.4"><path d="M0.4 1.9 H7.2 V8.5 Q7.2 9.2 6.5 9.2 H1.1 Q0.4 9.2 0.4 8.5 Z" fill="#a4a4a4"/><path d="M0.1 1.5H7.5" stroke="#e0e0e0" stroke-width="0.9"/><path d="M2.6 1.2V0.4H5V1.2" fill="none" stroke="#e0e0e0" stroke-width="0.8"/><path d="M2.3 2.8V8.2M3.8 2.8V8.2M5.3 2.8V8.2" stroke="#d8d8d8" stroke-width="0.7"/></svg>
<svg class="r" style="left:168.20000000000002px;top:334.2px;" width="9" height="7" viewBox="0 0 9 7"><path d="M0.5 3.5 L3.2 6.2 L8.5 0.5" fill="none" stroke="#ececec" stroke-width="1.25"/></svg>
<div class="t " style="left:37px;top:390.29px;font-size:7.7px;line-height:9.62px;color:#dadada;border-bottom:0.8px dotted #bdbdbd;padding-bottom:0.2px;">Добавить ответ</div>
<div class="t " style="left:42px;top:547.80px;font-size:7.75px;line-height:9.69px;color:#dadada;border-bottom:0.8px dotted #bdbdbd;padding-bottom:0.2px;">Добавить комментарий к документу</div>
<svg class="r" style="left:64.2px;top:291.4px;" width="8" height="12.4" viewBox="0 0 8 12.4"><path d="M0.5 0.5 V9.6 L2.7 7.6 L4.4 11.6 L5.9 11 L4.2 7.2 L7.2 7 Z" fill="#fff" stroke="#333" stroke-width="0.8"/></svg>
<div class="r" style="left:870px;top:479px;width:170px;height:61.6px;background:#2c2c2c;border-radius:2.5px;box-shadow:0 1px 5px rgba(0,0,0,0.45);"></div>
<svg class="r" style="left:863.6px;top:492.4px;" width="7" height="14" viewBox="0 0 7 14"><path d="M7 0 L0.4 7 L7 14 Z" fill="#2c2c2c"/></svg>
<div class="r" style="left:883.4px;top:486px;width:6.6px;height:6.6px;background:#a9d6f7;"></div>
<div class="t " style="left:894px;top:485.20px;font-size:8px;line-height:10.0px;color:#e8e8e8;font-weight:bold;">Николай Козырев (Г...</div>
<div class="t " style="left:883.4px;top:495.62px;font-size:7px;line-height:8.75px;color:#c8c8c8;">1/17/2023 8:06 am</div>
<div class="t " style="left:883.4px;top:509.29px;font-size:7.7px;line-height:9.62px;color:#dadada;">Там точно одна?</div>
<div class="t " style="left:883.4px;top:524.49px;font-size:7.7px;line-height:9.62px;color:#dadada;border-bottom:0.8px dotted #bdbdbd;padding-bottom:0.2px;">Добавить ответ</div>
<svg class="r" style="left:988.8px;top:486.79999999999995px;" width="9.4" height="9.4" viewBox="0 0 9.4 9.4"><path d="M0.2 9.2 L0.8 6.6 L6.4 1 L8.4 3 L2.8 8.6 Z" fill="#e0e0e0"/><path d="M7 0.5 L7.7 -0.1 L9.5 1.7 L8.9 2.4 Z" fill="#e0e0e0"/></svg>
<svg class="r" style="left:1003.6999999999999px;top:486.5px;" width="7.6" height="9.4" viewBox="0 0 7.6 9.4"><path d="M0.4 1.9 H7.2 V8.5 Q7.2 9.2 6.5 9.2 H1.1 Q0.4 9.2 0.4 8.5 Z" fill="#a4a4a4"/><path d="M0.1 1.5H7.5" stroke="#e0e0e0" stroke-width="0.9"/><path d="M2.6 1.2V0.4H5V1.2" fill="none" stroke="#e0e0e0" stroke-width="0.8"/><path d="M2.3 2.8V8.2M3.8 2.8V8.2M5.3 2.8V8.2" stroke="#d8d8d8" stroke-width="0.7"/></svg>
<svg class="r" style="left:1017.1999999999999px;top:487.2px;" width="9" height="7" viewBox="0 0 9 7"><path d="M0.5 3.5 L3.2 6.2 L8.5 0.5" fill="none" stroke="#ececec" stroke-width="1.25"/></svg>
<div class="r" style="left:0px;top:565.4px;width:1024px;height:12.4px;background:#404040;"></div>
<div class="r" style="left:0px;top:565.3px;width:1024px;height:1.1px;background:#2e2e2e;"></div>
<div class="r" style="left:0px;top:577.8px;width:1024px;height:2.2px;background:#0c0c0c;"></div>
<div class="t " style="left:24px;top:570.31px;font-size:7.1px;line-height:8.88px;color:#e2e2e2;font-weight:bold;">Страница 2 из 2</div>
<div class="t " style="left:454px;top:570.25px;font-size:7.2px;line-height:9.0px;color:#e2e2e2;font-weight:bold;">Все изменения сохранены</div>
<div class="r" style="left:927px;top:566.5px;width:0.7px;height:11px;background:#555;"></div>
<div class="t " style="left:936px;top:570.38px;font-size:7px;line-height:8.75px;color:#e2e2e2;font-weight:bold;">Русский (Россия)</div>
<svg class="r" style="left:999.6px;top:573.1px;" width="3.6" height="2.6" viewBox="0 0 3.6 2.6"><path d="M0.3 0.3 L1.8 2.2 L3.3000000000000003 0.3" stroke="#d0d0d0" fill="none" stroke-width="0.9"/></svg>
<svg class="r" style="left:1009.4px;top:569.6px;" width="9.6" height="9.6" viewBox="0 0 9.6 9.6"><circle cx="4.8" cy="4.8" r="4.1" fill="none" stroke="#e4e4e4" stroke-width="1.1"/><ellipse cx="4.8" cy="4.8" rx="1.8" ry="4.1" fill="none" stroke="#e4e4e4" stroke-width="0.9"/><path d="M0.8 3.5H8.8M0.8 6.1H8.8" stroke="#e4e4e4" stroke-width="1.1"/></svg>
<div class="r" style="left:82.4px;top:433px;width:244.4px;height:91.2px;background:rgba(30,30,30,0.64);"></div>
<div class="t" style="left:93.6px;top:452.9px;font-size:22px;line-height:19.6px;font-weight:bold;color:#f8f4f4;white-space:pre;transform-origin:0 0;transform:scaleX(0.885);-webkit-text-stroke:0.55px #f8f4f4;">Действия: ответ,
пометить решенным,
удаление</div>
</div></body></html>
